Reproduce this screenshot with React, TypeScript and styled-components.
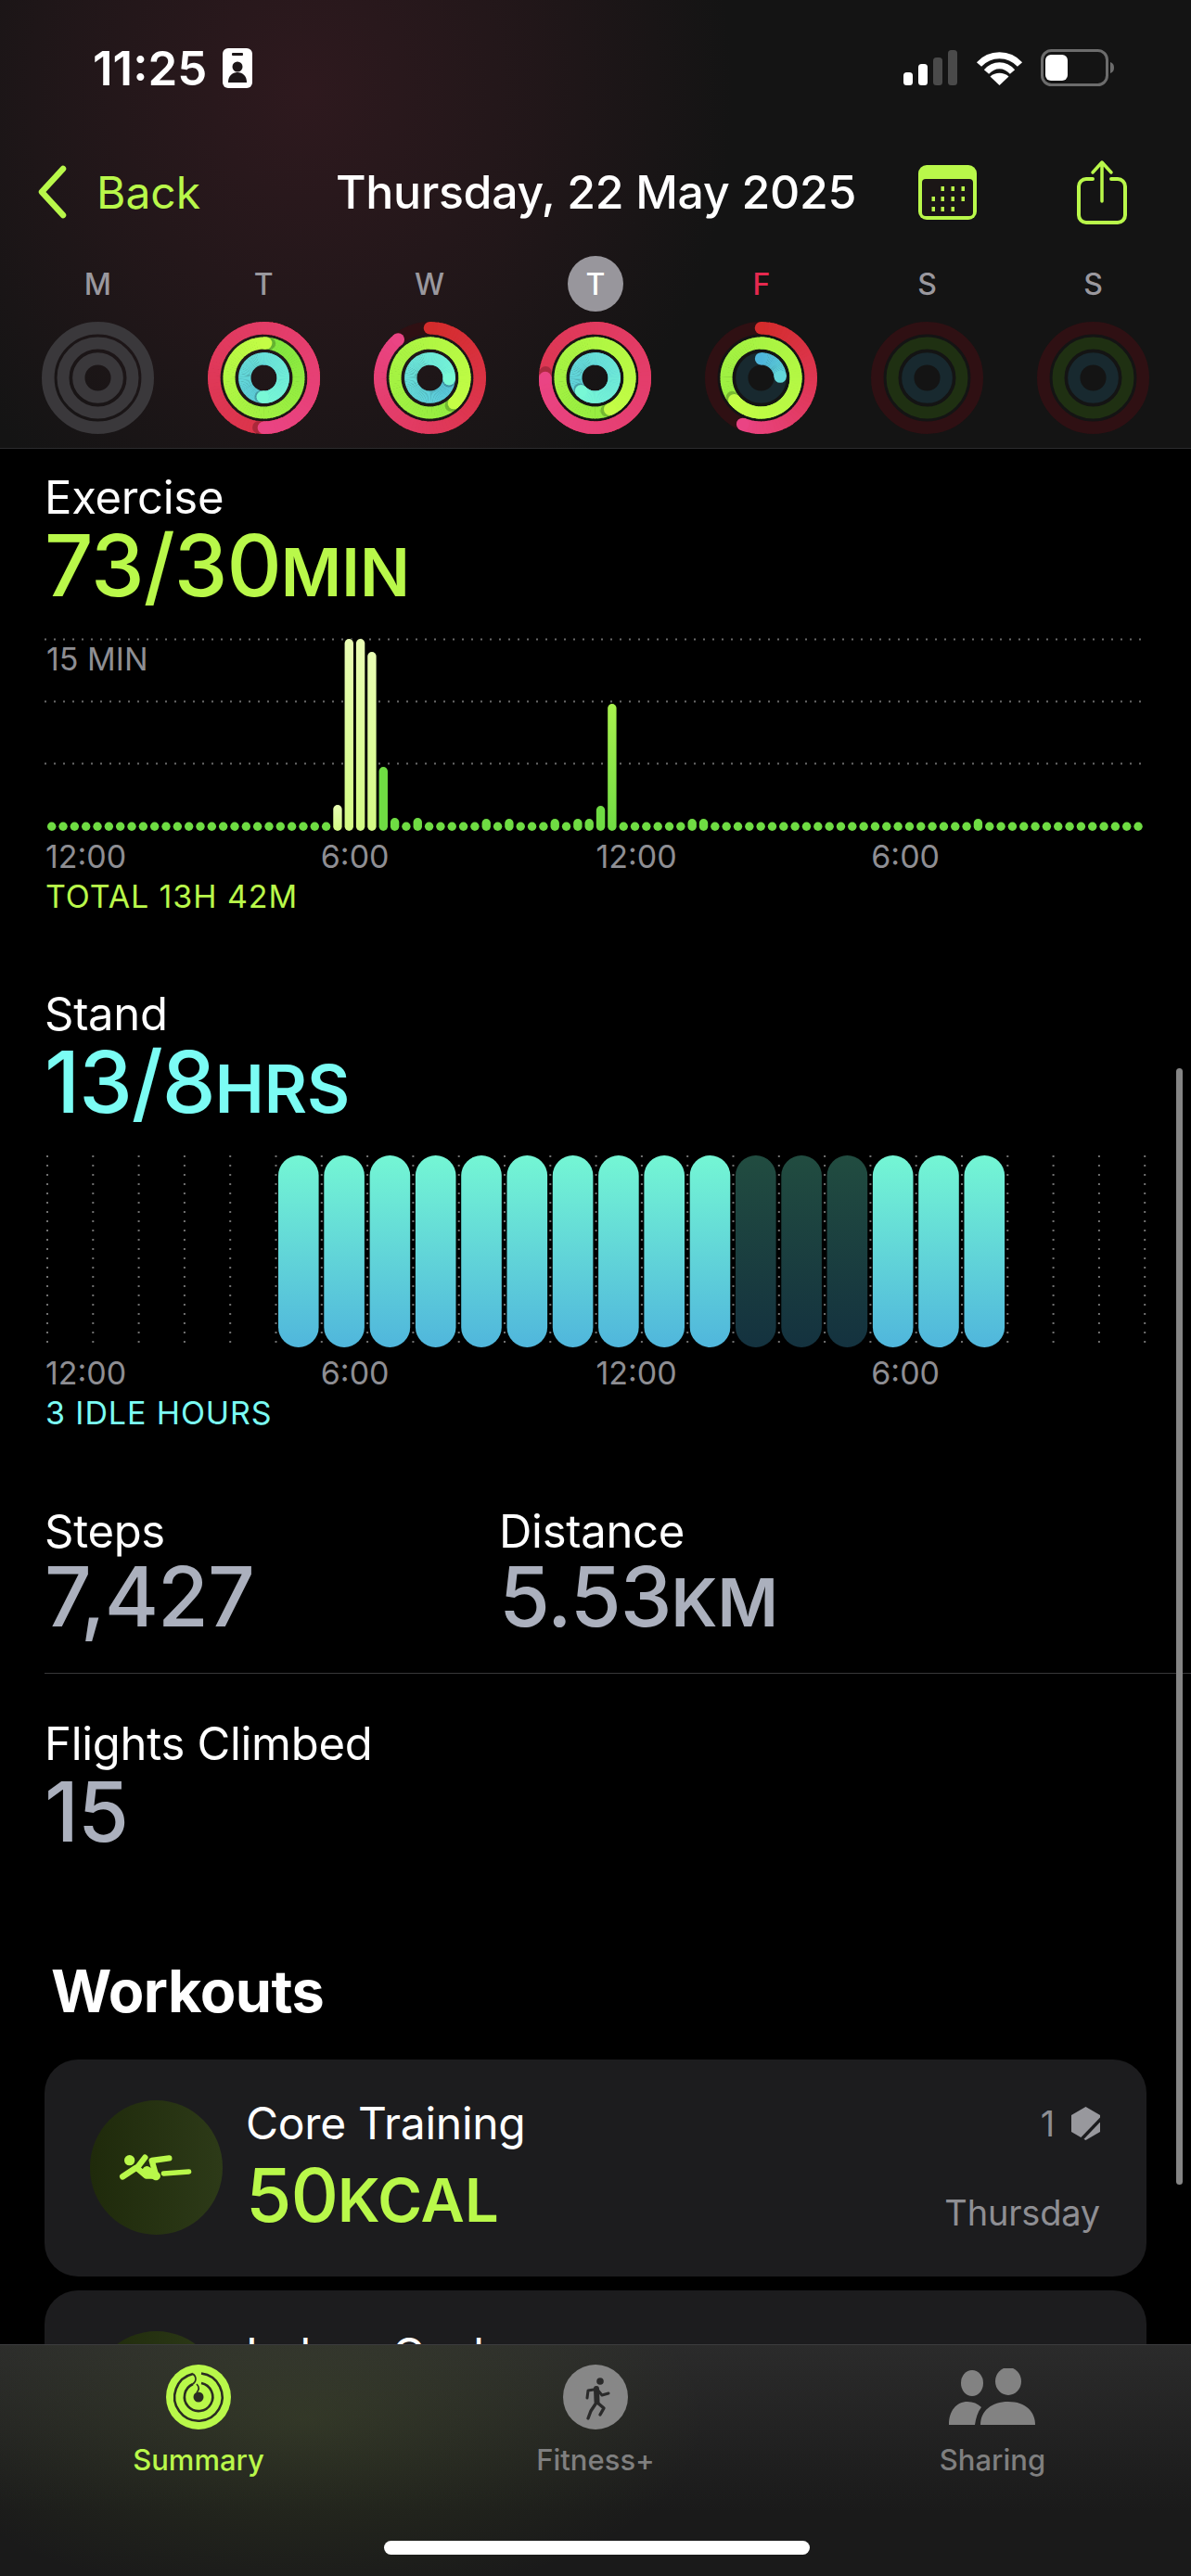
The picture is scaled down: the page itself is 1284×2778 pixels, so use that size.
import React from "react";
import styled, { createGlobalStyle } from "styled-components";

const LIME = "#b9f84a";
const CYAN = "#7bfcf4";
const GRAY = "#8e8e93";
const STEEL = "#abb0bd";

const Global = createGlobalStyle`
  html, body { margin: 0; padding: 0; background: #000; }
  * { box-sizing: border-box; }
  body { font-family: "Inter", "Liberation Sans", sans-serif; color: #fff; }
`;

const Page = styled.div`
  position: relative;
  width: 1284px;
  height: 2778px;
  display: flex;
  flex-direction: column;
  overflow: hidden;
  background: #000;
`;

const Header = styled.header`
  flex: 0 0 484px;
  padding-top: 46px;
  border-bottom: 1px solid #2c2c2e;
  background:
    radial-gradient(ellipse 460px 520px at 330px 100px, #2e191e 0%, rgba(46, 25, 30, 0.5) 55%, rgba(20, 20, 20, 0) 100%),
    #141414;
`;

const StatusBar = styled.div`
  height: 54px;
  display: flex;
  align-items: center;
  padding-left: 100px;
`;

const Time = styled.span`
  font-size: 51px;
  font-weight: 600;
  letter-spacing: 0;
  width: 140px;
`;

const StatusRight = styled.div`
  margin-left: auto;
  margin-right: 82px;
  display: flex;
  align-items: center;
  gap: 19px;
`;

const NavRow = styled.nav`
  margin-top: 67px;
  height: 80px;
  padding-left: 40px;
  display: grid;
  grid-template-columns: 322px 628px 170px auto;
  align-items: center;
`;

const BackGroup = styled.div`
  display: flex;
  align-items: center;
  gap: 32px;
  color: ${LIME};
  font-size: 48px;
`;

const Title = styled.div`
  font-size: 50px;
  font-weight: 500;
  letter-spacing: -0.3px;
  white-space: nowrap;
`;

const Week = styled.div`
  margin-top: 29px;
  padding: 0 16px;
  display: grid;
  grid-template-columns: repeat(7, 1fr);
`;

const Day = styled.div`
  display: flex;
  flex-direction: column;
  align-items: center;
  gap: 11px;
`;

const DayLetter = styled.div<{ $selected?: boolean; $today?: boolean }>`
  width: 60px;
  height: 60px;
  border-radius: 50%;
  display: flex;
  align-items: center;
  justify-content: center;
  font-size: 32px;
  font-weight: 500;
  background: ${(p) => (p.$selected ? "#98969c" : "transparent")};
  color: ${(p) => (p.$selected ? "#fff" : p.$today ? "#e5294f" : "#9a989e")};
`;

const Scroll = styled.main`
  flex: 1;
  min-height: 0;
  overflow: hidden;
`;

const Section = styled.section<{ $top: number }>`
  margin-top: ${(p) => p.$top}px;
  padding-left: 48px;
`;

const Label = styled.div`
  font-size: 49px;
  line-height: 50px;
  height: 50px;
  letter-spacing: -0.3px;
`;

const Value = styled.div<{ $color: string; $h?: number; $size?: number; $gap?: number }>`
  margin-top: ${(p) => p.$gap ?? 3}px;
  height: ${(p) => p.$h ?? 90}px;
  line-height: ${(p) => p.$h ?? 90}px;
  font-size: ${(p) => p.$size ?? 92}px;
  font-weight: 500;
  letter-spacing: -1px;
  color: ${(p) => p.$color};
  white-space: nowrap;
`;

const Unit = styled.span`
  font-size: 71px;
  font-weight: 600;
  letter-spacing: 0;
`;

const ChartBox = styled.div`
  position: relative;
  margin-top: 34px;
  height: 207px;
  width: 1190px;
`;

const ChartSvg = styled.svg`
  display: block;
  overflow: visible;
`;

const ChartNote = styled.span`
  position: absolute;
  left: 2px;
  top: 3px;
  font-size: 34px;
  line-height: 38px;
  color: ${GRAY};
  background: #000;
  padding-right: 4px;
`;

const Axis = styled.div`
  margin-top: 10px;
  height: 36px;
  width: 1188px;
  padding-left: 1px;
  display: grid;
  grid-template-columns: repeat(4, 1fr);
  font-size: 34px;
  line-height: 36px;
  color: ${GRAY};
`;

const Foot = styled.div<{ $color: string }>`
  margin-top: 7px;
  height: 36px;
  padding-left: 1px;
  font-size: 34px;
  letter-spacing: 0.9px;
  line-height: 36px;
  color: ${(p) => p.$color};
`;

const Stats = styled.div`
  display: grid;
  grid-template-columns: 490px auto;
`;

const Divider = styled.div`
  margin-top: 42px;
  margin-left: 48px;
  height: 1px;
  background: #38383a;
`;

const Heading = styled.h2`
  margin: 0;
  margin-top: 118px;
  padding-left: 55px;
  font-size: 63px;
  line-height: 70px;
  font-weight: 700;
  letter-spacing: -0.5px;
`;

const Cards = styled.div`
  margin: 39px 48px 0;
  display: flex;
  flex-direction: column;
  gap: 15px;
`;

const Card = styled.article`
  height: 234px;
  border-radius: 36px;
  background: #1c1c1e;
  padding: 44px 50px 0 49px;
  display: flex;
  gap: 25px;
`;

const WorkoutIcon = styled.div`
  flex: 0 0 143px;
  height: 145px;
  border-radius: 50%;
  background: linear-gradient(90deg, #1f2a0b, #2d3a18);
  display: flex;
  align-items: center;
  justify-content: center;
`;

const WorkoutText = styled.div`
  flex: 1;
`;

const WorkoutTop = styled.div`
  display: flex;
  justify-content: space-between;
  align-items: center;
  height: 50px;
  font-size: 48px;
  line-height: 50px;
  letter-spacing: -0.3px;
`;

const Badge = styled.span`
  display: flex;
  align-items: center;
  gap: 18px;
  font-size: 38px;
  color: ${GRAY};
`;

const WorkoutBottom = styled.div`
  margin-top: 7px;
  display: flex;
  justify-content: space-between;
  align-items: flex-end;
`;

const Kcal = styled.div`
  font-size: 80px;
  line-height: 90px;
  font-weight: 500;
  letter-spacing: -1px;
  color: ${LIME};
`;

const KcalUnit = styled.span`
  font-size: 65px;
  font-weight: 600;
  letter-spacing: 0;
`;

const DayName = styled.span`
  font-size: 38px;
  line-height: 50px;
  color: ${GRAY};
  margin-bottom: 7px;
  letter-spacing: -0.2px;
`;

const TabBar = styled.footer`
  position: relative;
  flex: 0 0 250px;
  border-top: 1px solid #3c3c3e;
  background:
    radial-gradient(ellipse 430px 200px at 330px 80px, rgba(130, 160, 60, 0.16), rgba(130, 160, 60, 0) 100%),
    linear-gradient(180deg, #2b2b2b 0%, #1a1a1a 72%);
  display: grid;
  grid-template-columns: 428px 428px 428px;
  padding-top: 21px;
`;

const Tab = styled.div<{ $active?: boolean }>`
  display: flex;
  flex-direction: column;
  align-items: center;
  gap: 14px;
  font-size: 31px;
  line-height: 38px;
  font-weight: 500;
  color: ${(p) => (p.$active ? LIME : "#7f7f7f")};
`;

const TabIcon = styled.div`
  height: 70px;
  display: flex;
  align-items: center;
  justify-content: center;
`;

const HomeBar = styled.div`
  position: absolute;
  left: 414px;
  top: 211px;
  width: 459px;
  height: 15px;
  border-radius: 8px;
  background: #fff;
`;

const ScrollThumb = styled.div`
  position: absolute;
  left: 1268px;
  top: 1152px;
  width: 7px;
  height: 1204px;
  border-radius: 4px;
  background: #858585;
`;

/* ---------- rings ---------- */

type Rgb = [number, number, number];
const mix = (a: Rgb, b: Rgb, t: number) =>
  `rgb(${a.map((v, i) => Math.round(v + (b[i] - v) * t)).join(",")})`;

const RING_DEFS: { r: number; w: number; from: Rgb; to: Rgb; track: string; blank: string }[] = [
  { r: 53.7, w: 13.6, from: [212, 44, 44], to: [234, 68, 132], track: "#2f1013", blank: "#3a383b" },
  { r: 37.5, w: 13, from: [128, 230, 63], to: [196, 253, 69], track: "#1f3012", blank: "#3a383b" },
  { r: 20.7, w: 13.3, from: [78, 182, 220], to: [120, 248, 214], track: "#18292f", blank: "#3a383b" },
];

const pt = (r: number, deg: number) => {
  const a = ((deg - 90) * Math.PI) / 180;
  return [r * Math.cos(a), r * Math.sin(a)];
};

const ActivityRing = ({ values, blank }: { values: number[]; blank?: boolean }) => (
  <svg width="121" height="121" viewBox="-60.5 -60.5 121 121">
    {RING_DEFS.map((d, i) => {
      const p = values[i];
      const steps = Math.max(2, Math.round(p * 90));
      const segs = [];
      const span = p < 0.5 ? 0.5 : 1;
      for (let s = 0; s < steps; s++) {
        const a0 = (s / steps) * p * 360;
        const a1 = ((s + 1) / steps) * p * 360 + 0.8;
        const [x0, y0] = pt(d.r, a0);
        const [x1, y1] = pt(d.r, a1);
        segs.push(
          <path
            key={s}
            d={`M${x0} ${y0}A${d.r} ${d.r} 0 0 1 ${x1} ${y1}`}
            fill="none"
            stroke={mix(d.from, d.to, (s / steps) * span)}
            strokeWidth={d.w}
          />
        );
      }
      const endDeg = p * 360;
      const [ex, ey] = pt(d.r, endDeg);
      const [sx, sy] = pt(d.r, endDeg + 6);
      const [ox, oy] = pt(d.r, 0);
      return (
        <g key={i}>
          <circle r={d.r} fill="none" stroke={blank ? d.blank : d.track} strokeWidth={d.w} />
          {p > 0 && (
            <>
              <circle cx={ox} cy={oy} r={d.w / 2} fill={mix(d.from, d.to, 0)} />
              {segs}
              {p >= 1 && <circle cx={sx} cy={sy} r={d.w / 2} fill="#000" opacity="0.22" />}
              <circle cx={ex} cy={ey} r={d.w / 2} fill={mix(d.from, d.to, span)} />
            </>
          )}
        </g>
      );
    })}
  </svg>
);

const DAYS: { l: string; v: number[]; blank?: boolean; selected?: boolean; today?: boolean }[] = [
  { l: "M", v: [0, 0, 0], blank: true },
  { l: "T", v: [1.5, 1.01, 1.51] },
  { l: "W", v: [0.89, 1.38, 1.26] },
  { l: "T", v: [1.75, 1.43, 1.63], selected: true },
  { l: "F", v: [0.56, 1.64, 0.24], today: true },
  { l: "S", v: [0, 0, 0] },
  { l: "S", v: [0, 0, 0] },
];

/* ---------- status and nav icons ---------- */

const PersonId = () => (
  <svg width="32" height="43" viewBox="0 0 32 43">
    <rect width="32" height="43" rx="6" fill="#fff" />
    <rect x="10" y="5" width="12" height="3" rx="1" fill="#1c1618" />
    <circle cx="16" cy="20" r="5.5" fill="#1c1618" />
    <path d="M6 37c0-7 4-11 10-11s10 4 10 11z" fill="#1c1618" />
  </svg>
);

const Signal = () => (
  <svg width="59" height="38" viewBox="0 0 59 38">
    <rect x="0" y="24" width="10" height="14" rx="3.5" fill="#fff" />
    <rect x="16" y="15" width="10" height="23" rx="3.5" fill="#fff" />
    <rect x="32" y="8" width="10" height="30" rx="3.5" fill="#4a4a4a" />
    <rect x="48" y="0" width="10" height="38" rx="3.5" fill="#4a4a4a" />
  </svg>
);

const Wifi = () => (
  <svg width="51" height="37" viewBox="0 0 51 37" fill="none">
    <path d="M3.5 14.5C15.5 1.5 35.5 1.5 47.5 14.5" stroke="#fff" strokeWidth="7" />
    <path d="M11.5 22.5C19.5 13.5 31.5 13.5 39.5 22.5" stroke="#fff" strokeWidth="7" />
    <path d="M25.5 37L15.5 27.5C21 22.5 30 22.5 35.5 27.5Z" fill="#fff" />
  </svg>
);

const Battery = () => (
  <svg width="80" height="40" viewBox="0 0 80 40">
    <rect x="1.5" y="1.5" width="70" height="37" rx="10" fill="none" stroke="#6c6c6c" strokeWidth="3" />
    <rect x="5" y="6" width="24" height="28" rx="6" fill="#fff" />
    <path d="M75 14c3 1 4 3 4 6s-1 5-4 6z" fill="#6c6c6c" />
  </svg>
);

const Chevron = () => (
  <svg width="32" height="58" viewBox="0 0 32 58" fill="none">
    <path d="M28 4L5 29L28 54" stroke={LIME} strokeWidth="6.5" strokeLinecap="round" strokeLinejoin="round" />
  </svg>
);

const Calendar = () => {
  const dots = [
    [26, 23], [37, 23], [48, 23],
    [16, 34], [26, 34], [37, 34], [48, 34],
    [16, 45], [26, 45], [37, 45],
  ];
  return (
    <svg width="63" height="59" viewBox="0 0 63 59">
      <rect width="63" height="59" rx="9" fill={LIME} />
      <rect x="4" y="15" width="55" height="40" rx="4" fill="#1b1616" />
      {dots.map(([x, y]) => (
        <rect key={`${x}-${y}`} x={x - 1.5} y={y} width="3.5" height="5" fill={LIME} />
      ))}
    </svg>
  );
};

const Share = () => (
  <svg width="56" height="70" viewBox="0 0 56 70" fill="none" stroke={LIME} strokeLinecap="round" strokeLinejoin="round">
    <path d="M18 21H11a8 8 0 0 0-8 8V60a8 8 0 0 0 8 8H45a8 8 0 0 0 8-8V29a8 8 0 0 0-8-8H38" strokeWidth="4" />
    <path d="M28 3V45M18 14L28 3L38 14" strokeWidth="3.5" />
  </svg>
);

const Hex = () => (
  <svg width="31" height="36" viewBox="0 0 31 36">
    <path d="M15.5 0L31 9V27L15.5 36L0 27V9Z" fill="#98989d" />
    <path d="M33 12L9 37" stroke="#1c1c1e" strokeWidth="3.5" />
  </svg>
);

const CoreFigure = () => (
  <svg width="100" height="60" viewBox="0 0 300 180" fill="none" stroke={LIME} strokeLinecap="round" strokeLinejoin="round">
    <circle cx="62" cy="65" r="17" fill={LIME} stroke="none" />
    <path d="M40 118L82 90" strokeWidth="20" />
    <path d="M112 56L86 90L116 116H148L134 66L190 58" strokeWidth="19" />
    <path d="M118 98L148 116" strokeWidth="28" />
    <path d="M172 108L254 102" strokeWidth="16" />
  </svg>
);

/* ---------- tab icons ---------- */

const SummaryIcon = () => (
  <svg width="70" height="70" viewBox="-35 -35 70 70" fill="none">
    <circle r="35" fill={LIME} />
    <circle r="5.5" fill="#2a2c22" />
    <path d="M3 -25.5A25.7 25.7 0 1 1 -6 -25" stroke="#2a2c22" strokeWidth="2.6" />
    <path d="M3 -15A15.2 15.2 0 1 1 -6 -14" stroke="#2a2c22" strokeWidth="2.6" />
    <path d="M-6 -25C-2 -22 -2 -17 -6 -14" stroke="#2a2c22" strokeWidth="1.6" />
    <path d="M-2 -14C1 -11 1 -8 -2 -5" stroke="#2a2c22" strokeWidth="1.6" />
  </svg>
);

const FitnessIcon = () => (
  <svg width="70" height="70" viewBox="0 0 70 70" fill="none" stroke="#2a2a2a" strokeLinecap="round" strokeLinejoin="round">
    <circle cx="35" cy="35" r="35" fill="#878787" stroke="none" />
    <circle cx="40" cy="18" r="3.8" fill="#2a2a2a" stroke="none" />
    <path d="M33 27L27 28L26 36" strokeWidth="3" />
    <path d="M36 26L36.5 40" strokeWidth="6" />
    <path d="M37 27L42 33L49 31" strokeWidth="3" />
    <path d="M36 41L30 50L27 58" strokeWidth="3.4" />
    <path d="M37 41L44 47L40 54" strokeWidth="3.4" />
  </svg>
);

const SharingIcon = () => (
  <svg width="94" height="62" viewBox="0 0 94 62" fill="#828282">
    <ellipse cx="25" cy="16" rx="12" ry="14" />
    <ellipse cx="64" cy="14" rx="14" ry="15" />
    <path d="M0 61C0 46 8 36 20 36C26 36 31 38 35 42C31 47 29 54 28 61Z" />
    <path d="M34 61C34 46 46 36 64 36C83 36 93 47 93 61Z" />
  </svg>
);

/* ---------- charts ---------- */

const EX_TALL: Record<number, number> = {
  25: 28, 26: 207, 27: 207, 28: 193, 29: 69, 30: 14, 32: 14, 38: 13, 40: 13, 44: 13, 46: 13, 47: 13, 48: 27, 49: 137, 56: 13, 57: 13, 81: 13,
};
const LIGHT = new Set([25, 26, 27, 28]);

const ExerciseChart = () => {
  const bars = Array.from({ length: 96 }, (_, i) => ({ i, h: EX_TALL[i] ?? 9.4 }));
  return (
    <ChartSvg width="1190" height="207" viewBox="0 0 1190 207">
      <defs>
        <linearGradient id="exLight" x1="0" y1="0" x2="0" y2="1">
          <stop offset="0" stopColor="#e9fdb4" />
          <stop offset="1" stopColor="#d3fb84" />
        </linearGradient>
        <linearGradient id="exGreen" x1="0" y1="0" x2="0" y2="1">
          <stop offset="0" stopColor="#a9f14e" />
          <stop offset="1" stopColor="#6fdc43" />
        </linearGradient>
      </defs>
      {[0, 67, 134].map((y) => (
        <line key={y} x1="0" x2="1185" y1={y + 0.5} y2={y + 0.5} stroke="#6a6a6a" strokeWidth="2" strokeDasharray="2 8" />
      ))}
      {bars.map(({ i, h }) => (
        <rect
          key={i}
          x={3 + i * 12.33}
          y={207 - h}
          width="9.4"
          height={h}
          rx="4.7"
          fill={LIGHT.has(i) ? "url(#exLight)" : i === 49 ? "url(#exGreen)" : "#6fdc43"}
          stroke="#000"
          strokeWidth={h > 30 ? 1.5 : 0}
          paintOrder="stroke"
        />
      ))}
    </ChartSvg>
  );
};

const DIM = new Set([10, 11, 12]);

const StandChart = () => (
  <ChartSvg width="1190" height="207" viewBox="0 0 1190 207">
    <defs>
      <linearGradient id="stOn" x1="0" y1="0" x2="0" y2="1">
        <stop offset="0" stopColor="#74f6d4" />
        <stop offset="1" stopColor="#50b6dc" />
      </linearGradient>
      <linearGradient id="stOff" x1="0" y1="0" x2="0" y2="1">
        <stop offset="0" stopColor="#214c40" />
        <stop offset="1" stopColor="#14323f" />
      </linearGradient>
    </defs>
    {Array.from({ length: 25 }, (_, i) => (
      <line key={i} x1={3 + i * 49.3} x2={3 + i * 49.3} y1="0" y2="207" stroke="#707070" strokeWidth="2" strokeDasharray="2 8" />
    ))}
    {Array.from({ length: 16 }, (_, i) => (
      <rect key={i} x={252 + i * 49.3} y="0" width="43.6" height="207" rx="21.8" fill={DIM.has(i) ? "url(#stOff)" : "url(#stOn)"} />
    ))}
  </ChartSvg>
);

export default function App() {
  return (
    <Page>
      <Global />
      <Header>
        <StatusBar>
          <Time>11:25</Time>
          <PersonId />
          <StatusRight>
            <Signal />
            <Wifi />
            <Battery />
          </StatusRight>
        </StatusBar>
        <NavRow>
          <BackGroup>
            <Chevron />
            <span>Back</span>
          </BackGroup>
          <Title>Thursday, 22 May 2025</Title>
          <Calendar />
          <Share />
        </NavRow>
        <Week>
          {DAYS.map((d, i) => (
            <Day key={i}>
              <DayLetter $selected={d.selected} $today={d.today}>{d.l}</DayLetter>
              <ActivityRing values={d.v} blank={d.blank} />
            </Day>
          ))}
        </Week>
      </Header>

      <Scroll>
        <Section $top={28}>
          <Label>Exercise</Label>
          <Value $color={LIME}>73/30<Unit>MIN</Unit></Value>
          <ChartBox>
            <ExerciseChart />
            <ChartNote>15 MIN</ChartNote>
          </ChartBox>
          <Axis>
            <span>12:00</span><span>6:00</span><span>12:00</span><span>6:00</span>
          </Axis>
          <Foot $color={LIME}>TOTAL 13H 42M</Foot>
        </Section>

        <Section $top={84}>
          <Label>Stand</Label>
          <Value $color={CYAN}>13/8<Unit>HRS</Unit></Value>
          <ChartBox>
            <StandChart />
          </ChartBox>
          <Axis>
            <span>12:00</span><span>6:00</span><span>12:00</span><span>6:00</span>
          </Axis>
          <Foot $color={CYAN}>3 IDLE HOURS</Foot>
        </Section>

        <Section $top={85}>
          <Stats>
            <div>
              <Label>Steps</Label>
              <Value $color={STEEL} $h={80} $size={89} $gap={5}>7,427</Value>
            </div>
            <div>
              <Label>Distance</Label>
              <Value $color={STEEL} $h={80} $size={89} $gap={5}>5.53<Unit>KM</Unit></Value>
            </div>
          </Stats>
        </Section>
        <Divider />
        <Section $top={51}>
          <Label>Flights Climbed</Label>
          <Value $color={STEEL} $h={80} $size={89} $gap={8}>15</Value>
        </Section>

        <Heading>Workouts</Heading>
        <Cards>
          <Card>
            <WorkoutIcon><CoreFigure /></WorkoutIcon>
            <WorkoutText>
              <WorkoutTop>
                <span>Core Training</span>
                <Badge>1 <Hex /></Badge>
              </WorkoutTop>
              <WorkoutBottom>
                <Kcal>50<KcalUnit>KCAL</KcalUnit></Kcal>
                <DayName>Thursday</DayName>
              </WorkoutBottom>
            </WorkoutText>
          </Card>
          <Card>
            <WorkoutIcon />
            <WorkoutText>
              <WorkoutTop>
                <span>Indoor Cycle</span>
              </WorkoutTop>
            </WorkoutText>
          </Card>
        </Cards>
      </Scroll>

      <TabBar>
        <Tab $active>
          <TabIcon><SummaryIcon /></TabIcon>
          Summary
        </Tab>
        <Tab>
          <TabIcon><FitnessIcon /></TabIcon>
          Fitness+
        </Tab>
        <Tab>
          <TabIcon><SharingIcon /></TabIcon>
          Sharing
        </Tab>
        <HomeBar />
      </TabBar>
      <ScrollThumb />
    </Page>
  );
}
